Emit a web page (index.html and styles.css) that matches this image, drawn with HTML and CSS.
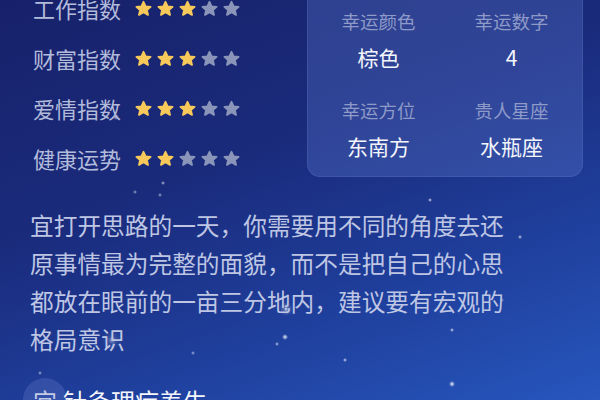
FILE: index.html
```html
<!DOCTYPE html>
<html lang="zh-CN">
<head>
<meta charset="utf-8">
<link rel="stylesheet" href="styles.css">
</head>
<body>
<svg class="defs" width="0" height="0" aria-hidden="true">
  <symbol id="star" viewBox="0 0 24 24">
    <polygon points="12,2.5 15,9 22,9.6 16.8,14.2 18.4,21 12,17.3 5.6,21 7.2,14.2 2,9.6 9,9" stroke-width="2.6" stroke-linejoin="round"/>
  </symbol>
</svg>
<div class="page">
  <div class="top">
    <div class="ratings">
      <div class="rating"><span class="label">工作指数</span><span class="stars"><svg class="s on"><use href="#star"/></svg><svg class="s on"><use href="#star"/></svg><svg class="s on"><use href="#star"/></svg><svg class="s off"><use href="#star"/></svg><svg class="s off"><use href="#star"/></svg></span></div>
      <div class="rating"><span class="label">财富指数</span><span class="stars"><svg class="s on"><use href="#star"/></svg><svg class="s on"><use href="#star"/></svg><svg class="s on"><use href="#star"/></svg><svg class="s off"><use href="#star"/></svg><svg class="s off"><use href="#star"/></svg></span></div>
      <div class="rating"><span class="label">爱情指数</span><span class="stars"><svg class="s on"><use href="#star"/></svg><svg class="s on"><use href="#star"/></svg><svg class="s on"><use href="#star"/></svg><svg class="s off"><use href="#star"/></svg><svg class="s off"><use href="#star"/></svg></span></div>
      <div class="rating"><span class="label">健康运势</span><span class="stars"><svg class="s on"><use href="#star"/></svg><svg class="s on"><use href="#star"/></svg><svg class="s off"><use href="#star"/></svg><svg class="s off"><use href="#star"/></svg><svg class="s off"><use href="#star"/></svg></span></div>
    </div>
    <div class="panel">
      <div class="cell"><div class="k">幸运颜色</div><div class="v">棕色</div></div>
      <div class="cell"><div class="k">幸运数字</div><div class="v">4</div></div>
      <div class="cell"><div class="k">幸运方位</div><div class="v">东南方</div></div>
      <div class="cell"><div class="k">贵人星座</div><div class="v">水瓶座</div></div>
    </div>
  </div>
  <p class="desc">宜打开思路的一天，你需要用不同的角度去还原事情最为完整的面貌，而不是把自己的心思都放在眼前的一亩三分地内，建议要有宏观的格局意识</p>
  <div class="yi"><span class="badge">宜</span><span class="yi-text">针灸理疗养生</span></div>
</div>
</body>
</html>
```
FILE: styles.css
```css
html, body {
  margin: 0;
  padding: 0;
}
body {
  width: 600px;
  height: 400px;
  overflow: hidden;
  font-family: "Noto Sans CJK SC", "Noto Sans", sans-serif;
  background:
    radial-gradient(circle at 286px 309px, rgba(255,255,255,0.9) 0, rgba(255,255,255,0.25) 2px, rgba(255,255,255,0) 7px),
    radial-gradient(circle at 285px 337px, rgba(255,255,255,0.9) 0, rgba(255,255,255,0) 3px),
    radial-gradient(circle at 277px 344px, rgba(255,255,255,0.7) 0, rgba(255,255,255,0) 2px),
    radial-gradient(circle at 112px 340px, rgba(255,255,255,0.5) 0, rgba(255,255,255,0.1) 4px, rgba(255,255,255,0) 10px),
    radial-gradient(circle at 452px 330px, rgba(255,255,255,0.8) 0, rgba(255,255,255,0) 2px),
    radial-gradient(circle at 452px 384px, rgba(255,255,255,0.9) 0, rgba(255,255,255,0) 3px),
    radial-gradient(circle at 345px 360px, rgba(255,255,255,0.8) 0, rgba(255,255,255,0) 2px),
    radial-gradient(circle at 520px 237px, rgba(255,255,255,0.8) 0, rgba(255,255,255,0) 2px),
    radial-gradient(circle at 430px 200px, rgba(255,255,255,0.8) 0, rgba(255,255,255,0) 2px),
    radial-gradient(circle at 163px 183px, rgba(255,255,255,0.7) 0, rgba(255,255,255,0) 2px),
    radial-gradient(circle at 135px 192px, rgba(255,255,255,0.6) 0, rgba(255,255,255,0) 2px),
    radial-gradient(circle at 160px 195px, rgba(255,255,255,0.6) 0, rgba(255,255,255,0) 2px),
    radial-gradient(circle at 116px 117px, rgba(255,255,255,0.7) 0, rgba(255,255,255,0) 3px),
    radial-gradient(circle at 193px 353px, rgba(255,255,255,0.6) 0, rgba(255,255,255,0) 2px),
    radial-gradient(circle at 40px 373px, rgba(255,255,255,0.6) 0, rgba(255,255,255,0) 2px),
    radial-gradient(circle at 502px 300px, rgba(255,255,255,0.5) 0, rgba(255,255,255,0) 2px),
    linear-gradient(160deg, #17216a 0%, #1a2b7c 40%, #1f3f9c 70%, #2756bd 100%);
}
.defs {
  position: absolute;
  width: 0;
  height: 0;
}
.page {
  display: flex;
  flex-direction: column;
}
.top {
  display: flex;
  margin-top: -17px;
  padding-left: 33px;
  padding-right: 17px;
}
.ratings {
  display: flex;
  flex-direction: column;
}
.rating {
  height: 50px;
  display: flex;
  align-items: center;
  gap: 14px;
}
.label {
  font-size: 22px;
  line-height: 26px;
  color: #b3bbdb;
}
.stars {
  display: flex;
  gap: 5px;
  padding-top: 1px;
}
.s {
  width: 17px;
  height: 17px;
}
.s.on {
  fill: #f7c95a;
  stroke: #f7c95a;
}
.s.off {
  fill: #8a95b9;
  stroke: #8a95b9;
}
.panel {
  margin-left: auto;
  width: 276px;
  box-sizing: border-box;
  padding: 26px 6px 16px 4px;
  display: grid;
  grid-template-columns: 133px 133px;
  row-gap: 27px;
  background: rgba(100, 130, 215, 0.3);
  border: 1px solid rgba(150, 170, 235, 0.14);
  border-top: none;
  border-radius: 0 0 13px 13px;
  align-self: flex-start;
}
.cell {
  display: flex;
  flex-direction: column;
  align-items: center;
  gap: 10px;
}
.k {
  font-size: 18.5px;
  line-height: 24px;
  color: #8e9ac8;
}
.v {
  font-size: 21px;
  line-height: 28px;
  color: #f4f6fc;
  font-weight: 400;
}
.desc {
  margin: 23px 0 0 30px;
  width: 480px;
  font-size: 23.7px;
  line-height: 38px;
  color: #bec6e4;
}
.yi {
  display: flex;
  align-items: center;
  margin-top: 20px;
  padding-left: 23px;
}
.badge {
  width: 44px;
  height: 44px;
  border-radius: 50%;
  background: rgba(140, 160, 230, 0.2);
  display: flex;
  align-items: center;
  justify-content: center;
  font-size: 24px;
  color: #c3cae6;
  margin-right: -4px;
}
.yi-text {
  font-size: 24px;
  color: #f4f6fc;
}
```
